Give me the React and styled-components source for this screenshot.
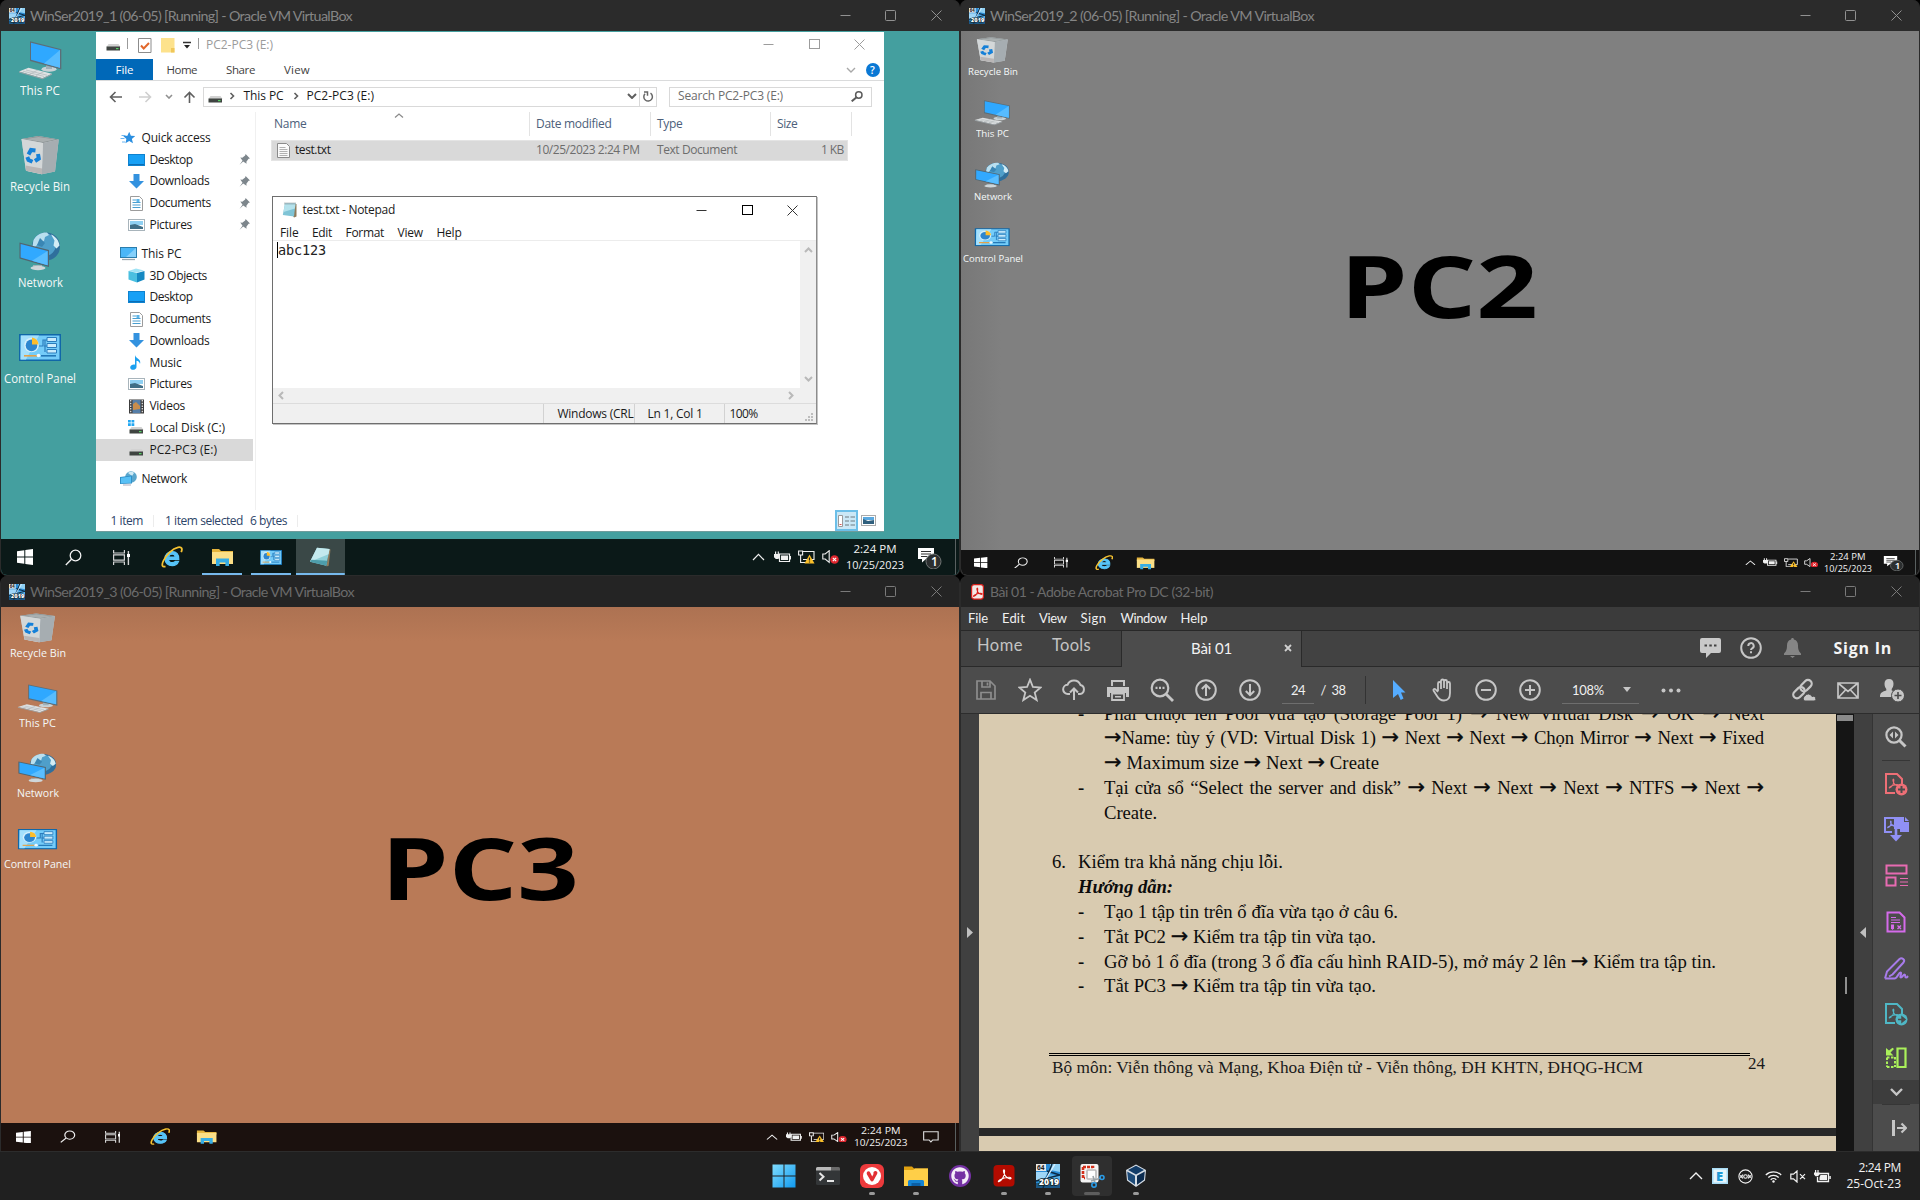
import React, { useLayoutEffect, useRef } from "react";
import styled, { createGlobalStyle, css } from "styled-components";
import { FaGithub } from "react-icons/fa";

const UI = '"Open Sans", "Noto Sans", sans-serif';
const HOST = 'Lato, "Open Sans", sans-serif';

const Global = createGlobalStyle`
  * { box-sizing: border-box; }
  html, body { margin: 0; padding: 0; background: #000; overflow: hidden; }
  svg { display: block; flex: none; }
`;

/* ---------- text that is tracked or stretched to a set width ---------- */

const TextBox = styled.span`
  display: block;
  flex: none;
  white-space: pre;
  width: ${(p) => (p.$w ? p.$w + "px" : "auto")};
  font-family: ${(p) => p.$font || UI};
  font-size: ${(p) => p.$size || 12}px;
  font-weight: ${(p) => p.$weight || 400};
  font-style: ${(p) => (p.$italic ? "italic" : "normal")};
  line-height: ${(p) => p.$lh || 16}px;
  color: ${(p) => p.$color || "#1a1a1a"};
`;
const TextRun = styled.span`
  display: inline-block;
  transform-origin: 0 50%;
`;

function T({ w, size, color, font, weight, italic, lh, stretch, children }) {
  const ref = useRef(null);
  useLayoutEffect(() => {
    const el = ref.current;
    if (!el || !w) return;
    el.style.letterSpacing = "0px";
    el.style.transform = "none";
    const natural = el.getBoundingClientRect().width;
    if (stretch) el.style.transform = `scaleX(${w / natural})`;
    else el.style.letterSpacing = `${(w - natural) / el.textContent.length}px`;
  }, [w, stretch, children]);
  return (
    <TextBox $w={w} $size={size} $color={color} $font={font} $weight={weight} $italic={italic} $lh={lh}>
      <TextRun ref={ref}>{children}</TextRun>
    </TextBox>
  );
}

/* ---------- host window chrome ---------- */

const Screen = styled.div`
  width: 1920px;
  height: 1200px;
  display: grid;
  grid-template-columns: 960px 960px;
  grid-template-rows: 576px 575px 49px;
  overflow: hidden;
  background: #000;
`;
const Win = styled.section`
  display: flex;
  flex-direction: column;
  overflow: hidden;
  border: solid #2b2b2b;
  border-width: 0 1px ${(p) => (p.$upper ? 1 : 0)}px;
  border-radius: 7px 7px ${(p) => (p.$upper ? "7px 7px" : "0 0")};
  background: #262626;
`;
const TitleBar = styled.header`
  height: 31px;
  flex: none;
  display: flex;
  align-items: center;
  padding-left: 8px;
  background: ${(p) => p.$bg || "#2b2b2b"};
`;
const TitleText = styled.div`
  padding: 0 0 0 ${(p) => p.$gap || 5}px;
  flex: 1;
`;
const CtrlCell = styled.div`
  width: ${(p) => p.$w || 45.6}px;
  height: 29px;
  display: grid;
  place-items: center;
`;

function Controls({ color = "#8a8a8a", w, sharp, strong }) {
  const s = { fill: "none", stroke: color, strokeWidth: 1 };
  return (
    <>
      <CtrlCell $w={w}><svg width="11" height="11" {...s}><path d="M0.5 5.5h10" /></svg></CtrlCell>
      <CtrlCell $w={w}><svg width="11" height="11" {...s} stroke={strong || color}><rect x="0.5" y="0.5" width="10" height={sharp ? 9 : 10} rx={sharp ? 0 : 1} /></svg></CtrlCell>
      <CtrlCell $w={w}><svg width="11" height="11" {...s}><path d="M0.5 0.5l10 10M10.5 0.5l-10 10" /></svg></CtrlCell>
    </>
  );
}

const VmIcon = ({ size = 16 }) => (
  <svg width={size} height={size} viewBox="0 0 24 24">
    <rect width="24" height="24" fill="#2a8cd6" />
    <path d="M0 8h12l-4 8H0z" fill="#9fd6f7" />
    <path d="M14 0h10v8l-10-2z" fill="#8fd0f5" />
    <path d="M13 10l11 2v5H10z" fill="#56b0ea" />
    <path d="M16 0L7 24M11 7l13 4M0 17l24-6" stroke="#0b2a45" strokeWidth="1.5" />
    <path d="M19 0L10 15" stroke="#d9f1ff" strokeWidth="1.3" />
    <rect width="10" height="7" fill="#e8e8e8" />
    <text x="1" y="6" fontSize="6.5" fontWeight="700" fontFamily="Open Sans" fill="#222">64</text>
    <rect y="19" width="24" height="5" fill="#14334f" opacity=".6" />
    <text x="3" y="20.5" fontSize="8.6" fontWeight="800" fontFamily="Open Sans" fill="#fff" stroke="#122" strokeWidth="1.4" paintOrder="stroke" textLength="20">2019</text>
  </svg>
);

/* ---------- large desktop icons ---------- */

const Big = ({ w, h, children }) => (
  <svg width={w} height={h} viewBox="0 0 44 44" preserveAspectRatio="none">{children}</svg>
);
const BigPC = (p) => (
  <Big {...p}>
    <ellipse cx="31" cy="31.2" rx="7.5" ry="2.6" fill="#c9d2d6" />
    <path d="M28 26h6v5h-6z" fill="#9fb0b8" />
    <path d="M12 3.3L43.3 11.2V31.5L12 23z" fill="#5c6e78" />
    <path d="M13 4.8L42 12V29.8L13 21.8z" fill="#2fa8ff" />
    <path d="M42 12V29.8L26 25.4z" fill="#57bcff" />
    <path d="M1 33.4L10.5 29.8L34 35.8L24.5 40.2z" fill="#dfe2e3" />
    <path d="M5 33.2l21 5.2M8 32l21 5.2M12 36l8-4M18 37.5l8-4" stroke="#aab0b3" strokeWidth=".6" />
    <path d="M1 33.4L24.5 40.2L34 35.8v1L24.5 41.3L1 34.4z" fill="#9aa2a6" />
  </Big>
);
const BigBin = (p) => (
  <Big {...p}>
    <path d="M3.5 5L20.5 2L40.7 5.4L37 37.6L23.8 40.3L8 36.8z" fill="#c6cbcd" />
    <path d="M3.5 5L20.5 2L40.7 5.4L25 9z" fill="#8c9496" />
    <path d="M6.5 5.2L20.5 3L37.5 5.5L25 8z" fill="#a9afb0" />
    <path d="M25 9L40.7 5.4L37 37.6L23.8 40.3z" fill="#a6adb1" />
    <path d="M3.5 5L25 9L23.8 40.3L8 36.8z" fill="#d3d7d8" />
    <path d="M7.6 31.5L24 34.5V40.3L8 36.8z" fill="#b9b6b6" />
    <g fill="none" stroke="#1580d8" strokeWidth="4">
      <path d="M10.500 20.500l2.500-4.500 4.500.5" />
      <path d="M20 20l.8 4.500-3.800 2.500" />
      <path d="M14.500 27.800l-4-1.800-1.200-3" />
    </g>
  </Big>
);
const BigNet = (p) => (
  <Big {...p}>
    <circle cx="28" cy="16.5" r="14" fill="#2f6f9c" />
    <circle cx="26.500" cy="14.500" r="11.500" fill="#4f9fca" />
    <path d="M15.500 10C19 4 25 2 29 2.600L31 5l-4 2-1 4-5 2-4 4-2.500-1z" fill="#b9dfef" />
    <path d="M33 4.500c5 2 8 6.500 8.500 11l-3 3-3-3 1-5z" fill="#d3ecf5" />
    <path d="M22 8l5 5-3 4-5-2z" fill="#3a86b4" />
    <path d="M15 35h9v3h-9z" fill="#9fb0b8" />
    <ellipse cx="20" cy="38" rx="7.500" ry="2.200" fill="#cfd6d9" />
    <path d="M1.500 12.600L31 20V37L1.500 28.600z" fill="#52656f" />
    <path d="M2.600 14L29.600 21V35.200L2.600 27.500z" fill="#31a9ff" />
    <path d="M29.600 21V35.200L14 30.700z" fill="#5abeff" />
  </Big>
);
const CpBody = () => (
  <>
    <rect x="1" y="8" width="42" height="27" fill="#1067a8" />
    <rect x="2.500" y="9.500" width="39" height="24" fill="#74ccf9" />
    <path d="M3 9.500h18L8 33.500H2.500z" fill="#a5e0fc" />
    <circle cx="13.500" cy="19" r="7.300" fill="#d5effc" />
    <circle cx="13.500" cy="19.400" r="5.800" fill="#2d86cf" />
    <path d="M14 18.500V11.500A7 7 0 0 1 20.500 18.500z" fill="#fdbd2c" />
    <path d="M21 20h4V14h4M29 20h-3M27 26V14" fill="none" stroke="#2b7dbd" strokeWidth="1.200" />
    <path d="M29 11.500h9.500v4H29zM29 17.500h9.500v4H29zM29 23.500h9.500v3.500H29z" fill="#c9ebfc" stroke="#2b7dbd" strokeWidth="1" />
    <path d="M6 29.800h13" stroke="#e2a24a" strokeWidth="1.600" />
    <path d="M23 29.800h15" stroke="#2278b8" strokeWidth="1.600" />
    <circle cx="20.500" cy="29.500" r="1.800" fill="#eef9ff" />
  </>
);
const BigCP = (p) => <Big {...p}><CpBody /></Big>;

const ICONS = { "This PC": BigPC, "Recycle Bin": BigBin, Network: BigNet, "Control Panel": BigCP };

/* ---------- guest desktops ---------- */

const Guest = styled.div`
  position: relative;
  flex: 1;
  display: flex;
  flex-direction: column;
  background: ${(p) => p.$bg};
`;
const Canvas = styled.div`
  flex: 1;
  position: relative;
`;
const IconColumn = styled.div`
  display: flex;
  flex-direction: column;
  width: ${(p) => p.$w}px;
  padding-top: ${(p) => p.$top}px;
`;
const DeskItem = styled.div`
  height: ${(p) => p.$h}px;
  display: flex;
  flex-direction: column;
  align-items: center;
`;
const Wallpaper = styled.div`
  position: absolute;
  left: ${(p) => p.$x}px;
  top: ${(p) => p.$y}px;
`;

function DesktopIcons({ items, colW, top, pitch, iw, ih, size, lh, widths, color }) {
  return (
    <IconColumn $w={colW} $top={top}>
      {items.map((name) => {
        const I = ICONS[name];
        return (
          <DeskItem key={name} $h={pitch}>
            <I w={iw} h={ih} />
            <T w={widths[name]} size={size} lh={lh} color={color || "#f4f8f8"} stretch>{name}</T>
          </DeskItem>
        );
      })}
    </IconColumn>
  );
}

const GuestBar = styled.footer`
  height: ${(p) => p.$h}px;
  flex: none;
  display: flex;
  background: ${(p) => p.$bg};
`;
const BarCell = styled.div`
  width: ${(p) => p.$w}px;
  height: 100%;
  display: grid;
  place-items: center;
  flex: none;
  padding-right: ${(p) => p.$pr || 0}px;
  ${(p) => p.$open && css`
    background: linear-gradient(#76b9ed, #76b9ed) 50% 100% / 40px 2px no-repeat;
  `}
  ${(p) => p.$active && css`
    background: linear-gradient(#76b9ed, #76b9ed) 50% 100% / 100% 2px no-repeat #3a4847;
  `}
`;
const Spacer = styled.div`flex: 1;`;
const Clock = styled.div`
  width: ${(p) => p.$w}px;
  display: flex;
  flex-direction: column;
  align-items: center;
  justify-content: center;
`;
const PeekLine = styled.div`
  width: 4px;
  border-left: 1px solid #596060;
`;

const Sv = ({ sx, sy, w, h = w, children }) => (
  <svg width={w * sx} height={h * sy} viewBox={`0 0 ${w} ${h}`} preserveAspectRatio="none">{children}</svg>
);
const FolderPic = () => (
  <>
    <path d="M1 2h7l2 2h12v3H1z" fill="#e5b43c" />
    <path d="M1 5h21v12H1z" fill="#fbdf87" />
    <path d="M5 19v-7.500h13V19h-3.600v-3.600H8.600V19z" fill="#37aee6" />
  </>
);
const IePic = () => (
  <>
    <path d="M17.800 13.500H7.500c.3 2.200 2 3.200 3.800 3.200 1.500 0 2.500-.6 3-1.400h3.300c-1 2.800-3.500 4.400-6.400 4.400-4 0-7.200-2.800-7.200-7S7.200 5.500 11.200 5.500c4.200 0 7 3 6.600 8zM7.600 11h6.700c-.2-1.800-1.500-2.900-3.200-2.900S7.900 9.200 7.600 11z" fill="#57c4f8" stroke="#57c4f8" strokeWidth="1.200" />
    <path d="M4.500 20.300C1.500 21.500.3 19.500 2.300 15 5 9 11.500 2.500 17 1.300c4-.8 4.600 1.700 3.200 4.900" fill="none" stroke="#f7c331" strokeWidth="1.800" />
  </>
);

function GuestTaskbar({ h, bg, sx, sy, apps = 2, clock, badge, textLh, textSize }) {
  const g = { sx, sy };
  const white = "#f0f0f0";
  return (
    <GuestBar $h={h} $bg={bg}>
      <BarCell $w={48 * sx}>
        <Sv {...g} w={16}><path d="M0 2.300L7.300 1.200V7.500H0zM8.300 1L16 0V7.500H8.300zM0 8.500h7.300v6.300L0 13.700zM8.300 8.500H16V16l-7.700-1z" fill="#fff" /></Sv>
      </BarCell>
      <BarCell $w={48 * sx}>
        <Sv {...g} w={17}><circle cx="10.500" cy="6.500" r="5.300" fill="none" stroke={white} strokeWidth="1.300" /><path d="M6.500 10.300L.8 16" stroke={white} strokeWidth="1.400" /></Sv>
      </BarCell>
      <BarCell $w={48 * sx}>
        <Sv {...g} w={17} h={15}><path d="M.6 0v3h10.800V0M.6 15v-3h10.800v3M.6 4.800h10.800v5.400H.6z" fill="none" stroke="#d4d4d4" strokeWidth="1.200" /><path d="M15.400 1v14" stroke="#d4d4d4" strokeWidth="1.400" /><path d="M14 4h3v3h-3z" fill="#fff" /></Sv>
      </BarCell>
      <BarCell $w={54 * sx}><Sv {...g} w={22}><IePic /></Sv></BarCell>
      <BarCell $w={46 * sx} $open={apps > 2}><Sv {...g} w={23} h={20}><FolderPic /></Sv></BarCell>
      {apps > 2 && (
        <>
          <BarCell $w={51 * sx} $open>
            <svg width="22" height="15" viewBox="1 8 42 27" preserveAspectRatio="none"><CpBody /></svg>
          </BarCell>
          <BarCell $w={48.500 * sx} $active>
            <svg width="23" height="20" viewBox="0 0 23 20"><path d="M20 2l1.500.4-1.800 16.400-2.200.6z" fill="#8f7a5a" /><path d="M8 .8L20.500 2 17.300 18.800 1 14.800z" fill="#8fd0d8" /><path d="M8 .8L20.500 2l-1 5.200L1 14.800z" fill="#c4eaee" /><path d="M17.300 18.800L1 14.800l1.500-2 16 1z" fill="#4d9dab" /></svg>
          </BarCell>
        </>
      )}
      <Spacer />
      <BarCell $w={24 * sx}><Sv {...g} w={13} h={8}><path d="M1 7l5.500-5.600L12 7" fill="none" stroke={white} strokeWidth="1.200" /></Sv></BarCell>
      <BarCell $w={24 * sx}>
        <Sv {...g} w={17} h={12}><path d="M5.500 3h10v7.500h-10z" fill="none" stroke={white} strokeWidth="1.200" /><path d="M7 4.500h7v4.500H7zM15.800 5h1.200v3.500h-1.200zM0 3h6v3.300L4.300 8H1.800L0 6.300zM1 .5h1.200V3H1zM3.700.5h1.200V3H3.700z" fill={white} /></Sv>
      </BarCell>
      <BarCell $w={24 * sx}>
        <Sv {...g} w={17} h={14}><path d="M5 1.500h11v8H5M.6 1h4v4h-4zM2.600 5v7.500H8" fill="none" stroke={white} strokeWidth="1.100" /><path d="M11.500 4.500L16.500 13.500h-10z" fill="#fbc02a" /><path d="M11.500 7.500v3M11.500 11.500v1" stroke="#222" strokeWidth="1.200" /></Sv>
      </BarCell>
      <BarCell $w={24 * sx}>
        <Sv {...g} w={17} h={14}><path d="M.8 4h2.400l4-3.300v11.600L3.200 9H.8z" fill="none" stroke={white} strokeWidth="1.100" /><circle cx="12.500" cy="9.500" r="4.300" fill="#e0262e" /><path d="M10.800 7.800l3.400 3.400M14.200 7.800l-3.400 3.400" stroke="#fff" strokeWidth="1.100" /></Sv>
      </BarCell>
      <Clock $w={66 * sx}>
        <T w={clock[0]} size={textSize} lh={textLh} color="#f2f2f2" stretch>2:24 PM</T>
        <T w={clock[1]} size={textSize} lh={textLh} color="#f2f2f2" stretch>10/25/2023</T>
      </Clock>
      <BarCell $w={47 * sx} $pr={4}>
        {badge ? (
          <Sv {...g} w={25} h={24}><path d="M1 3h16v11h-8l-4 3.500V14H1z" fill="#fff" /><path d="M4 6.500h10M4 9h10M4 11.500h6" stroke="#333" strokeWidth="1" /><circle cx="16.500" cy="16.500" r="7.500" fill="#2c2f30" stroke="#707575" /><text x="14" y="21" fontSize="12" fontFamily="Open Sans" fontWeight="600" fill="#fff">1</text></Sv>
        ) : (
          <Sv {...g} w={17} h={16}><path d="M.7 1h15.600v10.500H10.500L8.500 14l-2-2.500H.7z" fill="none" stroke="#ddd" strokeWidth="1.200" /></Sv>
        )}
      </BarCell>
      <PeekLine />
    </GuestBar>
  );
}

/* ---------- file explorer ---------- */

const Explorer = styled.div`
  position: absolute;
  left: 95px;
  top: 1px;
  width: 788px;
  height: 500px;
  display: flex;
  flex-direction: column;
  background: #fff;
  border-bottom: 1px solid #6f9c9c;
`;
const ExTitle = styled.div`
  height: 27px;
  display: flex;
  align-items: center;
  padding: 0 1.500px 1.500px 9px;
`;
const Sep = styled.i`
  width: 1px;
  height: 11px;
  background: #9a9a9a;
  margin: 0 ${(p) => p.$r}px 3px ${(p) => p.$l}px;
`;
const Gap = styled.i`
  flex: none;
  width: ${(p) => p.$w}px;
`;
const Ribbon = styled.div`
  height: 22px;
  display: flex;
  align-items: center;
  border-bottom: 1px solid #dadbdc;
`;
const FileTab = styled.div`
  width: 57px;
  height: 21px;
  display: grid;
  place-items: center;
  background: #0068b8;
`;
const AddressRow = styled.div`
  height: 31px;
  display: flex;
  align-items: center;
  padding: 0 0 0 13px;
`;
const Field = styled.div`
  height: 20px;
  flex: none;
  width: ${(p) => p.$w}px;
  display: flex;
  align-items: center;
  border: 1px solid #d9d9d9;
  padding: 0 0 1px ${(p) => p.$p}px;
`;
const Refresh = styled.div`
  width: 17px;
  height: 18px;
  margin-bottom: -1px;
  border-left: 1px solid #d9d9d9;
  display: grid;
  place-items: center;
`;
const ExBody = styled.div`
  flex: 1;
  display: flex;
  min-height: 0;
`;
const Tree = styled.nav`
  width: 160px;
  padding-top: 15px;
  border-right: 1px solid #f0f0f0;
`;
const TreeRow = styled.div`
  height: 21.75px;
  width: 157px;
  display: flex;
  align-items: center;
  padding-left: ${(p) => (p.$root ? 24 : 32)}px;
  margin-top: ${(p) => p.$gap || 0}px;
  background: ${(p) => (p.$sel ? "#d9d9d9" : "none")};
`;
const TreeIcon = styled.span`
  width: 21.500px;
  flex: none;
`;
const Pin = styled.span`
  margin-left: auto;
  padding-right: 3px;
`;
const Files = styled.div`
  flex: 1;
  padding-left: 15px;
`;
const HeadRow = styled.div`
  height: 24px;
  display: flex;
`;
const HeadCell = styled.div`
  width: ${(p) => p.$w}px;
  padding: 4px 0 0 ${(p) => p.$p}px;
  border-right: 1px solid #e3e3e3;
`;
const FileRow = styled.div`
  margin-top: 4px;
  height: 21px;
  width: 577px;
  display: flex;
  align-items: center;
  padding-bottom: 1px;
  background: #d9d9d9;
  border: 1px solid #e4e4e4;
`;
const Cell = styled.div`
  width: ${(p) => p.$w}px;
  flex: none;
  display: flex;
  align-items: center;
  justify-content: ${(p) => (p.$end ? "flex-end" : "flex-start")};
`;
const ExStatus = styled.div`
  height: 21px;
  display: flex;
  align-items: center;
  padding: 0 8px 0 14.500px;
`;
const StatusSep = styled.i`
  width: 1px;
  height: 12px;
  background: #ececec;
`;
const ViewBtn = styled.div`
  width: 23px;
  height: 21px;
  display: grid;
  place-items: center;
  background: #cbe8f6;
  border: 2px solid #6cbfe8;
  margin-right: 3px;
`;

const Drive = ({ win }) => (
  <svg width="16" height="15" viewBox="0 0 16 15">
    <path d="M3.500 7h10l2 3H1.500z" fill="#d2d2d2" />
    <rect x="1.500" y="9.500" width="13.500" height="4" fill="#3f4441" />
    <rect x="11" y="11" width="2.500" height="1.200" fill="#56d364" />
    {win && <path d="M0 0h2.800v2.600H0zM3.500 0h2.800v2.600H3.500zM0 3.300h2.800v2.600H0zM3.500 3.300h2.800v2.600H3.500z" fill="#22a7f2" />}
  </svg>
);
const Globe = () => (
  <svg width="17" height="15" viewBox="0 0 17 15"><circle cx="11" cy="6" r="5.800" fill="#5aa6cc" /><path d="M8 2c3-2 5-1 6 0l-2 3z" fill="#cfeaf5" /><path d="M0 6l12-1.500v8l-12 .5z" fill="#2f90c8" /><path d="M1 6.800l10-1.200v6.200l-10 .4z" fill="#58c0f5" /><path d="M3 13.500h8v1H3z" fill="#aab" /></svg>
);
const Small = {
  star: <svg width="16" height="14" viewBox="0 0 16 14"><path d="M9.200 .8l1.700 4 4.300.3-3.300 2.800 1.100 4.400-3.800-2.400-3.800 2.400 1-4.400-3.200-2.800 4.200-.3z" fill="#2b8fe0" /><path d="M1.500 4.500h4M.5 7.500h4M2 11h3" stroke="#6cb6f0" /></svg>,
  desktop: <svg width="17" height="12" viewBox="0 0 17 12"><rect x=".5" y=".5" width="16" height="11" fill="#17a0f5" stroke="#0e82cf" /><path d="M1 10.500h15" stroke="#0b6db5" /></svg>,
  down: <svg width="17" height="15" viewBox="0 0 17 15"><path d="M5.500 0h6v7H16l-7.500 7.500L1 7h4.500z" fill="#3392df" /></svg>,
  doc: <svg width="17" height="15" viewBox="0 0 17 15"><path d="M2.500.5h9l3 3v11h-12z" fill="#fff" stroke="#9c9c9c" /><path d="M4.500 4h4M4.500 6.500h8M4.500 9h8M4.500 11.500h8" stroke="#4a9fd0" /><path d="M8.500 3h3v3h-3z" fill="#5db5e8" /></svg>,
  pic: <svg width="17" height="12" viewBox="0 0 17 12"><rect x=".5" y=".5" width="16" height="11" fill="#fff" stroke="#a8b4bb" /><path d="M2 2h13v4H2z" fill="#8fd0f2" /><path d="M2 6l5-1 8 3v2H2z" fill="#3f6e86" /></svg>,
  pc: <svg width="17" height="14" viewBox="0 0 17 14"><rect x=".5" y=".5" width="16" height="10" fill="#4ab6f7" stroke="#2b7dac" /><path d="M16 1v9L6 10z" fill="#85d0fb" /><path d="M2 12.500h13" stroke="#9aa6ad" strokeWidth="1.300" /></svg>,
  cube: <svg width="17" height="15" viewBox="0 0 17 15"><path d="M.5 3L8 .5l8 2-7 2z" fill="#9fe3f5" /><path d="M.5 3L9 5v9.500L.5 11.500z" fill="#49bfe0" /><path d="M9 5l7.500-2v8.500L9 14.500z" fill="#1489c2" /></svg>,
  music: <svg width="17" height="15" viewBox="0 0 17 15"><path d="M7 0c.5 3.500 6.500 3.500 5 9-.3-2-1.700-3-3.500-3.200v6.200C8.500 15.500 2 16 2.200 12.300 2.500 10 5 9.200 7 9.700z" fill="#1aa0f0" /></svg>,
  video: <svg width="17" height="15" viewBox="0 0 17 15"><rect x="1" y=".5" width="15" height="14" fill="#3c3c3c" /><path d="M4.500 1h8v13h-8z" fill="#567ea8" /><path d="M5 5l3-2 4 4v3l-7 1z" fill="#c98d4c" /><path d="M2.700 1v13M14.300 1v13" stroke="#e0e0e0" strokeWidth="1.300" strokeDasharray="1.500 1.200" /></svg>,
  drivec: <Drive win />,
  drive: <Drive />,
  net: <Globe />,
};

const TREE = [
  { n: "Quick access", i: "star", w: 69, root: 1 },
  { n: "Desktop", i: "desktop", w: 43, pin: 1 },
  { n: "Downloads", i: "down", w: 60, pin: 1 },
  { n: "Documents", i: "doc", w: 61.5, pin: 1 },
  { n: "Pictures", i: "pic", w: 42.5, pin: 1 },
  { n: "This PC", i: "pc", w: 40, root: 1, gap: 7.3 },
  { n: "3D Objects", i: "cube", w: 57.5 },
  { n: "Desktop", i: "desktop", w: 43 },
  { n: "Documents", i: "doc", w: 61.5 },
  { n: "Downloads", i: "down", w: 60 },
  { n: "Music", i: "music", w: 32 },
  { n: "Pictures", i: "pic", w: 42.5 },
  { n: "Videos", i: "video", w: 35.5 },
  { n: "Local Disk (C:)", i: "drivec", w: 75.5 },
  { n: "PC2-PC3 (E:)", i: "drive", w: 67.5, sel: 1 },
  { n: "Network", i: "net", w: 45.5, root: 1, gap: 7.3 },
];

const Arrow = ({ d, w = 14, h = 12, c = "#5f5f5f", sw = 1.6 }) => (
  <svg width={w} height={h} viewBox={`0 0 ${w} ${h}`} fill="none" stroke={c} strokeWidth={sw}><path d={d} /></svg>
);

function ExplorerWindow() {
  return (
    <Explorer>
      <ExTitle>
        <Drive /><Sep $l={5.5} $r={10.5} />
        <svg width="14" height="16"><path d="M.5 1.500h12.500v14H.5z" fill="#fff" stroke="#8c8c8c" /><path d="M3 8.500l2.700 3L11 6" fill="none" stroke="#e2682c" strokeWidth="2" /></svg>
        <Gap $w={9} />
        <svg width="14" height="16"><path d="M0 1h13.500v14.500H0z" fill="#fde28c" /><path d="M10 11h3.500v4.500H10z" fill="#f0c75a" /></svg>
        <Gap $w={7.5} />
        <svg width="8" height="8"><path d="M0 1.500h8" stroke="#333" strokeWidth="1.500" /><path d="M1 4h6L4 7.500z" fill="#222" /></svg>
        <Sep $l={7.5} $r={7} />
        <T w={67} color="#9b9b9b" size={12}>PC2-PC3 (E:)</T>
        <Spacer />
        <Controls color="#9c9c9c" w={45.6} sharp />
      </ExTitle>
      <Ribbon>
        <FileTab><T w={18} size={11.5} color="#fff">File</T></FileTab>
        <Gap $w={13.5} /><T w={30.5} size={11.5} color="#3f3f3f">Home</T>
        <Gap $w={29} /><T w={29} size={11.5} color="#3f3f3f">Share</T>
        <Gap $w={29} /><T w={26} size={11.5} color="#3f3f3f">View</T>
        <Spacer />
        <Arrow d="M1 1l4 4 4-4" w={10} h={6} c="#a8a8a8" sw={1.4} />
        <Gap $w={10} />
        <svg width="14" height="14"><circle cx="7" cy="7" r="7" fill="#0a78d4" /><text x="4" y="11" fontSize="10.500" fontFamily="Open Sans" fontWeight="600" fill="#fff">?</text></svg>
        <Gap $w={4} />
      </Ribbon>
      <AddressRow>
        <Arrow d="M13 6H1.500M6.500 1l-5 5 5 5" />
        <Gap $w={16} /><Arrow d="M0 6h11.500M6.500 1l5 5-5 5" c="#cfcfcf" />
        <Gap $w={12} /><Arrow d="M1 1l3 3 3-3" w={8} h={5} c="#909090" />
        <Gap $w={10} /><Arrow d="M6.500 12V1.500M1.500 6.500l5-5 5 5" w={13} h={12} />
        <Gap $w={7} />
        <Field $w={454} $p={2.5}>
          <Drive /><Gap $w={6.5} /><Arrow d="M1.500 1l3 3-3 3" w={6} h={8} />
          <Gap $w={8.5} /><T w={40}>This PC</T><Gap $w={9} /><Arrow d="M1.500 1l3 3-3 3" w={6} h={8} />
          <Gap $w={8} /><T w={67.5}>PC2-PC3 (E:)</T>
          <Spacer />
          <Arrow d="M1 1l4 4 4-4" w={10} h={6} sw={2} /><Gap $w={2.5} />
          <Refresh><svg width="12" height="12" fill="none" stroke="#666" strokeWidth="1.500"><path d="M8.500 2.200A4.300 4.300 0 1 1 3 2.800" /><path d="M2 1h3.500v3.800" /></svg></Refresh>
        </Field>
        <Gap $w={12} />
        <Field $w={203} $p={8}>
          <T w={105} color="#6d6d6d">Search PC2-PC3 (E:)</T>
          <Spacer />
          <svg width="12" height="11" fill="none" stroke="#5c5c5c"><circle cx="7.800" cy="4" r="3.200" strokeWidth="1.500" /><path d="M5.300 6.500L.7 10.300" strokeWidth="2" /></svg>
          <Gap $w={8} />
        </Field>
      </AddressRow>
      <ExBody>
        <Tree>
          {TREE.map((r, k) => (
            <TreeRow key={k} $root={r.root} $gap={r.gap} $sel={r.sel}>
              <TreeIcon>{Small[r.i]}</TreeIcon>
              <T w={r.w}>{r.n}</T>
              {r.pin && <Pin><svg width="11" height="11" viewBox="0 0 10 10"><path d="M6 0l4 4-1.300.4-2 2.600.2 1.800L3.800 6.800.5 9.800 3.200 6.200 1.200 3.200l1.800.1 2.600-2z" fill="#7d868c" /></svg></Pin>}
            </TreeRow>
          ))}
        </Tree>
        <Files>
          <HeadRow>
            <HeadCell $w={259} $p={3}><T w={32.5} color="#4c607a">Name</T></HeadCell>
            <HeadCell $w={121} $p={6}><T w={75.5} color="#4c607a">Date modified</T></HeadCell>
            <HeadCell $w={120} $p={6}><T w={25.5} color="#4c607a">Type</T></HeadCell>
            <HeadCell $w={81} $p={6}><T w={20.5} color="#4c607a">Size</T></HeadCell>
          </HeadRow>
          <FileRow>
            <Cell $w={264}>
              <Gap $w={5} />
              <svg width="13" height="15"><path d="M.5.500h9l3 3v11H.5z" fill="#fafafa" stroke="#8a8a8a" /><path d="M2.500 4.500h6M2.500 6.500h8M2.500 8.500h8M2.500 10.500h8M2.500 12.500h8" stroke="#a0a0a0" strokeWidth=".8" /></svg>
              <Gap $w={5} /><T w={35.5}>test.txt</T>
            </Cell>
            <Cell $w={121}><T w={103.5} color="#6d6d6d">10/25/2023 2:24 PM</T></Cell>
            <Cell $w={100}><T w={80} color="#6d6d6d">Text Document</T></Cell>
            <Cell $w={86.5} $end><T w={22.5} color="#6d6d6d">1 KB</T></Cell>
          </FileRow>
        </Files>
      </ExBody>
      <ExStatus>
        <T w={32.5} color="#2d4468">1 item</T><Gap $w={10} /><StatusSep /><Gap $w={11} />
        <T w={78} color="#2d4468">1 item selected</T><Gap $w={7} /><T w={37} color="#2d4468">6 bytes</T>
        <Gap $w={10} /><StatusSep />
        <Spacer />
        <ViewBtn><svg width="17" height="12"><path d="M.5.500h4v11h-4z" fill="#fff" stroke="#9a9a9a" /><path d="M1.500 9.500h2" stroke="#d55" /><path d="M7 2h4M12.500 2H17M7 6h4M12.500 6H17M7 10h4M12.500 10H17" stroke="#6f7a80" /></svg></ViewBtn>
        <svg width="15" height="11"><rect x=".5" y=".5" width="14" height="10" fill="#fff" stroke="#aaa" /><path d="M2 2h11v3H2z" fill="#5aa9e0" /><path d="M2 4l5 2 6-1v4H2z" fill="#2f5f7d" /></svg>
      </ExStatus>
      <SortMark><Arrow d="M1 4.500l4-3.500 4 3.500" w={10} h={5} c="#8a8a8a" sw={1.2} /></SortMark>
    </Explorer>
  );
}
const SortMark = styled.div`
  position: absolute;
  left: 298px;
  top: 81px;
`;

/* ---------- notepad ---------- */

const Notepad = styled.div`
  position: absolute;
  left: 271px;
  top: 165px;
  width: 545px;
  height: 228px;
  display: flex;
  flex-direction: column;
  background: #fff;
  border: 1px solid #6e6e6e;
  border-right-color: #8c8c8c;
  box-shadow: 1px 1px 0 #c4c4c4;
`;
const NpTitle = styled.div`
  height: 27px;
  display: flex;
  align-items: center;
  padding: 0 0.500px 1px 8.500px;
`;
const NpMenu = styled.div`
  height: 17px;
  display: flex;
  align-items: center;
  gap: 13.500px;
  padding: 2px 0 0 7px;
  border-bottom: 1px solid #ececec;
`;
const NpArea = styled.div`
  flex: 1;
  display: flex;
`;
const NpText = styled.div`
  flex: 1;
  display: flex;
  padding: 1px 0 0 4px;
`;
const Caret = styled.i`
  width: 1px;
  height: 16px;
  background: #000;
`;
const VScroll = styled.div`
  width: 16px;
  display: flex;
  flex-direction: column;
  justify-content: space-between;
  align-items: center;
  padding: 6px 0;
  background: #f0f0f0;
`;
const HScroll = styled.div`
  height: 15px;
  display: flex;
  justify-content: space-between;
  align-items: center;
  padding: 0 22px 0 5px;
  background: #f0f0f0;
`;
const NpStatus = styled.div`
  height: 20px;
  display: flex;
  background: #f0f0f0;
  border-top: 1px solid #dcdcdc;
`;
const NpCell = styled.div`
  width: ${(p) => p.$w}px;
  padding: 2px 0 0 ${(p) => p.$p || 0}px;
  border-right: 1px solid #d2d2d2;
  overflow: hidden;
`;
const Pad2 = styled.div`padding-top: 2px;`;
const Grip = styled.div`padding: 9px 2px 0 0;`;

const NotepadWindow = () => (
  <Notepad>
    <NpTitle>
      <svg width="16" height="16"><path d="M3 2l11.500 0v12.500L12 15.500z" fill="#8f7a5a" /><path d="M3 1.500h10.500L12 14.500 .8 13z" fill="#7fc4d6" /><path d="M3 1.500h10.500l-.6 5L1.500 10z" fill="#b4e2ec" /><path d="M3 .5v2M5 .5v2M7 .5v2M9 .5v2M11 .5v2M13 .5v2" stroke="#6d7c80" strokeWidth=".8" /></svg>
      <Gap $w={5} /><T w={92.5}>test.txt - Notepad</T><Spacer />
      <Controls color="#333" strong="#000" w={45.6} sharp />
    </NpTitle>
    <NpMenu>
      <T w={18.5}>File</T><T w={20}>Edit</T><T w={38.5}>Format</T><T w={25.5}>View</T><T w={25}>Help</T>
    </NpMenu>
    <NpArea>
      <NpText><Caret /><T w={48} size={13.5} font='"DejaVu Sans Mono", monospace' color="#222">abc123</T></NpText>
      <VScroll><Arrow d="M1 5l3.500-3.500L8 5" w={9} h={6} c="#b9b9b9" sw={2} /><Arrow d="M1 1l3.500 3.500L8 1" w={9} h={6} c="#b9b9b9" sw={2} /></VScroll>
    </NpArea>
    <HScroll><Arrow d="M5 1L1.500 4.500 5 8" w={6} h={9} c="#b9b9b9" sw={2} /><Arrow d="M1 1l3.500 3.500L1 8" w={6} h={9} c="#b9b9b9" sw={2} /></HScroll>
    <NpStatus>
      <NpCell $w={271} /><NpCell $w={91} $p={13.5}><T w={76}>Windows (CRL</T></NpCell>
      <NpCell $w={90} $p={12.5}><T w={55}>Ln 1, Col 1</T></NpCell>
      <Gap $w={4.5} /><Pad2><T w={28}>100%</T></Pad2><Spacer />
      <Grip><svg width="9" height="9" fill="#bdbdbd"><path d="M6 0h2v2H6zM3 3h2v2H3zM6 3h2v2H6zM0 6h2v2H0zM3 6h2v2H3zM6 6h2v2H6z" /></svg></Grip>
    </NpStatus>
  </Notepad>
);

/* ---------- Acrobat ---------- */

const MenuRow = styled.div`
  height: 24px;
  display: flex;
  align-items: center;
  padding: 0 0 1px 7px;
  gap: 14px;
  background: #3b3b3b;
  border-bottom: 1px solid #282828;
`;
const TabRow = styled.div`
  height: 36px;
  display: flex;
  background: #424242;
`;
const TabZone = styled.div`
  width: ${(p) => p.$w || "auto"};
  flex: ${(p) => p.$grow || "none"};
  display: flex;
  align-items: center;
  padding: 0 27px ${(p) => p.$pb}px 16px;
  border-bottom: 1px solid #2a2a2a;
`;
const ActiveTab = styled.div`
  width: 181px;
  display: flex;
  align-items: center;
  padding: 0 9px 3px 69px;
  justify-content: space-between;
  background: #4c4c4c;
  border: solid #2a2a2a;
  border-width: 0 1px;
`;
const Tools = styled.div`
  height: 47px;
  display: flex;
  align-items: center;
  padding-left: 3px;
  background: #4c4c4c;
  border-bottom: 1px solid #2d2d2d;
`;
const Tool = styled.div`
  width: ${(p) => p.$w || 44}px;
  flex: none;
  display: grid;
  place-items: center;
`;
const Under = styled.div`
  width: ${(p) => p.$w}px;
  height: 27px;
  display: flex;
  align-items: center;
  padding-left: ${(p) => p.$p}px;
  border-bottom: 1px solid #6e6e6e;
`;
const VLine = styled.i`
  width: 1px;
  height: 28px;
  background: #333;
`;
const DocRow = styled.div`
  flex: 1;
  display: flex;
  min-height: 0;
`;
const SideStrip = styled.div`
  width: 18px;
  flex: none;
  display: grid;
  place-items: center;
  background: #404040;
`;
const Pages = styled.div`
  width: 857px;
  flex: none;
  display: flex;
  flex-direction: column;
  gap: 8px;
  overflow: hidden;
  background: #282828;
`;
const Page = styled.article`
  height: ${(p) => p.$h}px;
  flex: none;
  overflow: hidden;
  background: #d9cbb0;
  color: #0c0c0c;
  font: 18.700px/24.850px "Liberation Serif", "Times New Roman", serif;
`;
const Lines = styled.div`
  margin-top: -12.500px;
  padding-left: 73px;
  height: 351.500px;
`;
const DocLine = styled.div`
  display: flex;
  height: 24.850px;
  margin-top: ${(p) => p.$gap || 0}px;
`;
const Mark = styled.b`
  width: ${(p) => p.$w}px;
  margin-left: ${(p) => p.$l || 0}px;
  font-weight: ${(p) => p.$weight || 700};
`;
const Just = styled.div`
  width: 660px;
  white-space: nowrap;
  text-align: justify;
  text-align-last: justify;
  letter-spacing: -0.150px;
`;
const Arr = styled.span`
  font-family: "DejaVu Sans", sans-serif;
  font-size: 21px;
  line-height: 0;
  -webkit-text-stroke: 0.300px #0c0c0c;
`;
const FootRule = styled.div`
  margin-left: 70px;
  width: 701px;
  height: 3px;
  border: solid #000;
  border-width: 1px 0;
`;
const Foot = styled.div`
  display: flex;
  padding-left: 73px;
`;
const ScrollTrack = styled.div`
  width: 18px;
  flex: none;
  background: #151515;
  padding: 1px 1px 0;
  display: flex;
  flex-direction: column;
  align-items: center;
`;
const Thumb = styled.i`
  width: 16px;
  height: 6px;
  background: #8a8a8a;
`;
const Mark2 = styled.i`
  width: 2px;
  height: 17px;
  margin: 256px 0 0 1px;
  background: #8f8f8f;
`;
const Rail = styled.aside`
  width: 47px;
  flex: none;
  display: flex;
  flex-direction: column;
  align-items: center;
  background: #4c4c4c;
  border-left: 1px solid #343434;
`;
const RailCell = styled.div`
  height: ${(p) => p.$h || 46}px;
  width: 46px;
  flex: none;
  display: grid;
  place-items: center;
  background: ${(p) => p.$bg || "none"};
`;
const HLine = styled.i`
  width: 28px;
  height: 1px;
  flex: none;
  background: #363636;
`;
const Gutter = styled.div`padding-left: 6px;`;

const Ic = ({ w = 24, h = w, c = "#c6c6c6", sw = 2, fill = "none", children }) => (
  <svg width={w} height={h} viewBox={`0 0 ${w} ${h}`} fill={fill} stroke={c} strokeWidth={sw}>{children}</svg>
);
const A = () => <Arr>→</Arr>;
const Acro = ({ x = 0, y = 0, s = 1, c }) => (
  <path transform={`translate(${x} ${y}) scale(${s})`} d="M1 11c2.500-1 5-5 5-9.500C6-.5 4.500 0 5 2c.5 3 3 6 6 6.500 1.500 0 1-1.500-1-1.500-3 0-6 .8-8.500 2.500C0 10.500 0 11.500 1 11z" fill="none" stroke={c} strokeWidth={1.1 / s} />
);

const DF = '"Liberation Serif", "Times New Roman", serif';
const Para = ({ w, children }) => <T w={w} size={18.7} lh={24.85} font={DF} color="#0c0c0c">{children}</T>;

function AcrobatWindow() {
  const m = { font: HOST, size: 13, color: "#f0f0f0" };
  return (
    <Win>
      <TitleBar $bg="#242424">
        <Gap $w={2} />
        <svg width="13" height="16" viewBox="0 0 13 16"><rect x=".6" y=".6" width="11.800" height="14.500" rx="2.500" fill="#f3e9e6" stroke="#d8201a" strokeWidth="1.200" /><Acro x={2.2} y={4} s={0.75} c="#d8201a" /></svg>
        <TitleText $gap={6}><T w={223} {...m} color="#6b6b6b" size={14}>Bài 01 - Adobe Acrobat Pro DC (32-bit)</T></TitleText>
        <Controls color="#7a7a7a" />
      </TitleBar>
      <MenuRow>
        <T w={20} {...m}>File</T><T w={23} {...m}>Edit</T><T w={27.5} {...m}>View</T><T w={26} {...m}>Sign</T><T w={46} {...m}>Window</T><T w={27} {...m}>Help</T>
      </MenuRow>
      <TabRow>
        <TabZone $w="160px" $pb={7}><T w={46} font={HOST} size={16.5} color="#c4c4c4">Home</T><Gap $w={29} /><T w={39} font={HOST} size={16.5} color="#c4c4c4">Tools</T></TabZone>
        <ActiveTab><T w={41} font={HOST} size={15} color="#f2f2f2">Bài 01</T><Ic w={8} sw={1.8} c="#d0d0d0"><path d="M1 1l6 6M7 1L1 7" /></Ic></ActiveTab>
        <TabZone $grow="1" $pb={2}>
          <Spacer />
          <Ic w={22} h={22} fill="#c9c9c9" c="none"><path d="M2 1h17a2 2 0 0 1 2 2v11a2 2 0 0 1-2 2H11l-5 5v-5H2a2 2 0 0 1-2-2V3a2 2 0 0 1 2-2z" /><path d="M4.500 7.500h2.500v2H4.500zM9.300 7.500h2.500v2H9.300zM14 7.500h2.500v2H14z" fill="#424242" /></Ic>
          <Gap $w={18.5} />
          <Ic w={22}><circle cx="11" cy="11" r="9.800" /><path d="M8.300 9a2.700 2.700 0 1 1 3.800 2.300c-.8.5-1.100.8-1.100 1.700M11 14.300v2" /></Ic>
          <Gap $w={22} />
          <Ic w={17} h={20} fill="#858585" c="none"><path d="M8.500 0c1 0 1.400.7 1.400 1.500 3 .8 4.100 3 4.100 6 0 5 1.500 6.500 3 8v1.500H0v-1.500c1.500-1.500 3-3 3-8 0-3 1.100-5.200 4.100-6C7.100.7 7.500 0 8.500 0zM6 18h5l-2.500 2z" /></Ic>
          <Gap $w={32.5} />
          <T w={58.5} font={UI} weight={700} size={16} lh={20} color="#f5f5f5">Sign In</T>
        </TabZone>
      </TabRow>
      <Tools>
        <Tool><Ic w={20} c="#8d8d8d" sw={1.7}><path d="M1 1h13l5 5v13H1zM6 1v6h8V1M5 19v-6.500h10V19" /><path d="M11.500 2.500v3" /></Ic></Tool>
        <Tool><Ic w={24} sw={1.8}><path d="M12 1.700l2.900 7.300 7.800.5-6 5 2 7.600-6.700-4.300-6.700 4.300 2-7.600-6-5 7.800-.5z" /></Ic></Tool>
        <Tool><Ic w={24} sw={2}><path d="M8 16H6a4.600 4.600 0 0 1-.5-9.200A7 7 0 0 1 18.500 7 4.600 4.600 0 0 1 18 16h-2M12 22V11M8 14.500l4-4 4 4" /></Ic></Tool>
        <Tool $w={43}><Ic w={22} h={22} c="none" fill="#c6c6c6"><path d="M4 1h14v6H4zM0 8h22v10h-3v-4H3v4H0z" /><path d="M5 14.500h12v6.500H5z" stroke="#c6c6c6" strokeWidth="1.800" fill="#4c4c4c" /><path d="M6 3h10v4H6z" fill="#4c4c4c" /><path d="M8 17h6v1.400H8z" /></Ic></Tool>
        <Tool $w={45}><Ic w={24} sw={2.2}><circle cx="10" cy="10" r="8.300" /><path d="M16 16l7 7" strokeWidth="2.800" /><path d="M5.500 9.800h2M9 9.800h2M12.500 9.800h2" /></Ic></Tool>
        <Tool><Ic w={22}><circle cx="11" cy="11" r="9.800" /><path d="M11 17V6M6.800 10L11 5.800 15.200 10" /></Ic></Tool>
        <Tool><Ic w={22}><circle cx="11" cy="11" r="9.800" /><path d="M11 5v11M6.800 12l4.200 4.200L15.200 12" /></Ic></Tool>
        <Gap $w={10} /><Under $w={32} $p={9}><T w={14} {...m}>24</T></Under>
        <Gap $w={6.5} /><T w={25} {...m}>/  38</T><Gap $w={19.5} /><VLine />
        <Gap $w={11} />
        <Tool $w={44}><Ic w={14} h={21} fill="#55acff" c="none"><path d="M1 0l12.500 12.500H9l2.500 6-2.800 1.500L6 14 1 18z" /></Ic></Tool>
        <Tool $w={43}><Ic w={24} sw={1.8}><path d="M7 13V5.500a1.500 1.500 0 0 1 3 0V11M10 10V3a1.500 1.500 0 0 1 3 0v7M13 10V3.500a1.500 1.500 0 0 1 3 0V11M16 11V5.500a1.500 1.500 0 0 1 3 0V15c0 5-2.500 7.500-6 7.500S8 21.500 6 18l-3.500-5.500c-.5-1.500 1-2.300 2.200-1L7 14" /></Ic></Tool>
        <Tool $w={44}><Ic w={22}><circle cx="11" cy="11" r="9.800" /><path d="M6 11h10" /></Ic></Tool>
        <Tool $w={44}><Ic w={22}><circle cx="11" cy="11" r="9.800" /><path d="M6 11h10M11 6v10" /></Ic></Tool>
        <Gap $w={10} />
        <Under $w={77} $p={10}><T w={32} {...m}>108%</T><Gap $w={19} /><svg width="8" height="5"><path d="M0 0h8L4 5z" fill="#c6c6c6" /></svg></Under>
        <Gap $w={22} />
        <Ic w={20} h={5} fill="#c6c6c6" c="none"><circle cx="2.500" cy="2.500" r="2" /><circle cx="10" cy="2.500" r="2" /><circle cx="17.500" cy="2.500" r="2" /></Ic>
        <Spacer />
        <Tool><Ic w={24} sw={2.2}><g transform="rotate(-45 11 11)"><rect x="-1" y="7" width="13" height="7.500" rx="3.750" /><rect x="9" y="7" width="13" height="7.500" rx="3.750" /></g><path d="M12.500 23a3 3 0 0 1 .3-5 4 4 0 0 1 7.200.5 2.400 2.400 0 0 1 2.500 4.500z" fill="#c6c6c6" stroke="#4c4c4c" strokeWidth="1" /></Ic></Tool>
        <Tool><Ic w={22} h={17} sw={1.7}><path d="M1 1h20v15H1zM1 1l10 8.500L21 1M1 16l7.500-8M21 16l-7.500-8" /></Ic></Tool>
        <Tool><Ic w={24} c="none" fill="#c6c6c6"><path d="M9 1c3 0 4.500 2 4.500 4.800 0 2.600-1 4-1.800 5.200v1.500c4 1 5 2 5.300 3.500L13 19H0c0-4 1.500-5 6.300-6.500V11C5.500 9.800 4.500 8.400 4.500 5.800 4.500 3 6 1 9 1z" /><circle cx="18" cy="17.500" r="6.500" stroke="#4c4c4c" strokeWidth="1" /><path d="M14.500 17.500h7M18 14v7" stroke="#4c4c4c" strokeWidth="1.600" /></Ic></Tool>
        <Gap $w={5} />
      </Tools>
      <DocRow>
        <SideStrip><svg width="6" height="11"><path d="M0 0l6 5.500L0 11z" fill="#c0c0c0" /></svg></SideStrip>
        <Pages>
          <Page $h={414}>
            <Lines>
              <DocLine><Mark $l={26} $w={26}>-</Mark><Just>Phải chuột lên Pool vừa tạo (Storage Pool 1) <A /> New Virtual Disk <A /> OK <A /> Next</Just></DocLine>
              <DocLine><Gap $w={52} /><Just><A />Name: tùy ý (VD: Virtual Disk 1) <A /> Next <A /> Next <A /> Chọn Mirror <A /> Next <A /> Fixed</Just></DocLine>
              <DocLine><Gap $w={52} /><Para w={275}><A /> Maximum size <A /> Next <A /> Create</Para></DocLine>
              <DocLine><Mark $l={26} $w={26}>-</Mark><Just>Tại cửa sổ “Select the server and disk” <A /> Next <A /> Next <A /> Next <A /> NTFS <A /> Next <A /></Just></DocLine>
              <DocLine><Gap $w={52} /><Para w={53}>Create.</Para></DocLine>
              <DocLine $gap={24.5}><Mark $w={26} $weight={400}>6.</Mark><Para w={205}>Kiểm tra khả năng chịu lỗi.</Para></DocLine>
              <DocLine><Gap $w={26} /><T w={95} size={18.7} lh={24.85} font={DF} weight={700} italic color="#0c0c0c">Hướng dẫn:</T></DocLine>
              <DocLine><Mark $l={26} $w={26}>-</Mark><Para w={294}>Tạo 1 tập tin trên ổ đĩa vừa tạo ở câu 6.</Para></DocLine>
              <DocLine><Mark $l={26} $w={26}>-</Mark><Para w={272}>Tắt PC2 <A /> Kiểm tra tập tin vừa tạo.</Para></DocLine>
              <DocLine><Mark $l={26} $w={26}>-</Mark><Para w={612}>Gỡ bỏ 1 ổ đĩa (trong 3 ổ đĩa cấu hình RAID-5), mở máy 2 lên <A /> Kiểm tra tập tin.</Para></DocLine>
              <DocLine><Mark $l={26} $w={26}>-</Mark><Para w={272}>Tắt PC3 <A /> Kiểm tra tập tin vừa tạo.</Para></DocLine>
            </Lines>
            <FootRule />
            <Foot>
              <T w={591} size={17.3} lh={24} font={DF} color="#1a1a1a">Bộ môn: Viễn thông và Mạng, Khoa Điện tử - Viễn thông, ĐH KHTN, ĐHQG-HCM</T>
              <Gap $w={105} /><T w={17} size={17} lh={16} font={DF} color="#1a1a1a">24</T>
            </Foot>
          </Page>
          <Page $h={20} />
        </Pages>
        <ScrollTrack><Thumb /><Mark2 /></ScrollTrack>
        <SideStrip><svg width="6" height="11"><path d="M6 0L0 5.500 6 11z" fill="#c0c0c0" /></svg></SideStrip>
        <Rail>
          <RailCell $h={46}><Ic w={22} sw={2.2}><circle cx="9" cy="9" r="7.600" /><path d="M14.500 14.500l6 6" strokeWidth="3" /><path d="M8 5.500v7L4.500 9zM10 5.500v7L13.500 9z" fill="#c6c6c6" stroke="none" /></Ic></RailCell>
          <HLine />
          <RailCell $h={46}><Ic w={24} c="#ee6f76" sw={2}><path d="M11 21H2V2h11l5 5v5" /><Acro x={5} y={7} s={0.8} c="#ee6f76" /><circle cx="17.500" cy="17.500" r="6" fill="#ee6f76" stroke="none" /><path d="M14 17.500h7M17.500 14v7" stroke="#4c4c4c" /></Ic></RailCell>
          <RailCell $h={45.5}><Ic w={25} h={25} c="#9090f4" sw={2}><path d="M8 15H1V1h10v11" /><path d="M12 0h8v5h5v10h-9v-3h-4zM21 0l4 4h-4z" fill="#9090f4" stroke="none" /><Acro x={3.5} y={4} s={0.6} c="#9090f4" /><path d="M12 12v7" strokeWidth="2.600" /><path d="M6 18h12l-6 6.500z" fill="#9090f4" stroke="none" /></Ic></RailCell>
          <RailCell><Ic w={23} h={23} c="#e76bb1" sw={2}><path d="M1.500 1.500h20v8h-20zM1.500 13.500h9v8h-9z" /><path d="M15 14.500h8M15 18h8M15 21.500h8" strokeWidth="1.200" /></Ic></RailCell>
          <RailCell><Ic w={20} h={22} c="#d46bea" sw={2}><path d="M1.500 1.500h12l5 5v14h-17z" /><path d="M5 6.500h5M5 9h9M5 11.500h9" strokeWidth="1.200" /><path d="M5 13.500h3v4l-1.500 1.500L5 17.500z" fill="#d46bea" stroke="none" /><path d="M11.500 14.500l3.500 3.500M15 14.500L11.500 18" strokeWidth="1.400" /></Ic></RailCell>
          <RailCell><Ic w={25} h={24} c="#a77bea" sw={2}><path d="M1 22.500l2-7L15.500 3c2.500-2 6 1 4 3.500L8.500 18.500l-3.500 2M1 22.500h9.500c3 0 4-6 6-6s-1.500 5 .5 5 2-3 3.500-3 0 3 1.500 3 1.500-1 2-1.500" /></Ic></RailCell>
          <RailCell><Ic w={24} c="#4fb7c5" sw={2}><path d="M11 21H2V2h11l5 5v5" /><Acro x={5} y={7} s={0.8} c="#4fb7c5" /><circle cx="17.500" cy="17.500" r="6" fill="#4fb7c5" stroke="none" /><path d="M14 17.500h4v-2.500l3 2.500-3 2.500v-2.500" fill="#4c4c4c" stroke="#4c4c4c" strokeWidth="1.500" /></Ic></RailCell>
          <RailCell $h={43}><Ic w={22} h={22} c="#aaf05a" sw={2.2}><path d="M12.500 1.500h8v18.500h-8z" /><path d="M2 10.500h8M2 10.500v9.500M2 20h8M10 10v10" strokeDasharray="2.500 1.500" strokeWidth="2" /><path d="M1 1v7.500h7.500L5.500 5.500 9 2 7.500 0.800 4 3.500z" fill="#aaf05a" stroke="none" /></Ic></RailCell>
          <RailCell $h={24} $bg="#3d3d3d"><Ic w={13} h={8} sw={2.4}><path d="M1 1l5.500 5.500L12 1" /></Ic></RailCell>
          <HLine />
          <RailCell $h={46}><Gutter><Ic w={15} h={16} sw={2.2}><path d="M1.500 0v16" strokeWidth="3" /><path d="M5 8h9M9.500 3.500L14 8l-4.500 4.500" /></Ic></Gutter></RailCell>
        </Rail>
      </DocRow>
    </Win>
  );
}

/* ---------- host taskbar ---------- */

const HostBar = styled.footer`
  grid-column: 1 / 3;
  display: flex;
  align-items: center;
  padding: 0 19px 0 762px;
  background: #202020;
  border-top: 1px solid #2c2c2c;
`;
const AppCell = styled.div`
  width: 44px;
  height: 48px;
  flex: none;
  display: flex;
  flex-direction: column;
  align-items: center;
  padding-top: 12px;
`;
const AppHot = styled.div`
  width: 40px;
  height: 40px;
  margin-top: -8px;
  padding-top: 8px;
  display: flex;
  flex-direction: column;
  align-items: center;
  border-radius: 4px;
  background: #2f2f2f;
`;
const Dot = styled.i`
  width: ${(p) => p.$w || 6}px;
  height: 3px;
  border-radius: 2px;
  margin-top: 4px;
  background: ${(p) => (p.$w ? "#5d5d5d" : "#9a9a9a")};
`;
const GitDisc = styled.div`
  width: 22px;
  height: 22px;
  margin-top: 1px;
  border-radius: 50%;
  display: grid;
  place-items: center;
  background: #7431a3;
  color: #f4eef8;
  font-size: 18px;
`;
const TrayCell = styled.div`
  width: ${(p) => p.$w}px;
  display: grid;
  place-items: center;
`;
const HostClock = styled.div`
  display: flex;
  flex-direction: column;
  align-items: flex-end;
  width: 62px;
`;

function HostTaskbar() {
  const W = "#f2f2f2";
  return (
    <HostBar>
      <AppCell><svg width="24" height="24"><defs><linearGradient id="wl" x2="1" y2="1"><stop stopColor="#7fdcfd" /><stop offset="1" stopColor="#109af0" /></linearGradient></defs><path d="M.5.500h11v11H.5zM12.500.500h11v11h-11zM.5 12.500h11v11H.5zM12.500 12.500h11v11h-11z" fill="url(#wl)" /></svg></AppCell>
      <AppCell><svg width="24" height="24"><rect y="3" width="24" height="18" rx="1.500" fill="#333638" /><path d="M0 6.500v-2A1.500 1.500 0 0 1 1.500 3H15v3.500z" fill="#b9b9b9" /><path d="M15 3h7.500A1.500 1.500 0 0 1 24 4.500v2h-9z" fill="#6a6a6a" /><path d="M3.500 9l4 3.700-4 3.700M11 17h7" fill="none" stroke="#e6e6e6" strokeWidth="2" /></svg></AppCell>
      <AppCell><svg width="24" height="24"><rect width="24" height="24" rx="6" fill="#ec3a3c" /><circle cx="12" cy="12" r="9" fill="#fff" /><path d="M6.800 8.500c.8-1.600 2.600-1.600 3.400 0l2 4 1.300-2.500c-.5-2 .8-3.200 2.300-3 1.500.3 2 1.600 1.300 3l-3.600 6.500c-.7 1.200-2.300 1.200-3 0L7 10.500c-.3-.7-.4-1.300-.2-2z" fill="#e22f33" /></svg><Dot /></AppCell>
      <AppCell><svg width="24" height="24"><path d="M0 2.500h8l2 2h14V9H0z" fill="#e1a211" /><path d="M0 6h9l2-1.500h13V22H0z" fill="#ffcf48" /><path d="M4 22v-4.500A1.500 1.500 0 0 1 5.500 16h13a1.500 1.500 0 0 1 1.500 1.500V22z" fill="#1484d4" /><path d="M7.500 19h9v3h-9z" fill="#0b5fa5" /></svg><Dot /></AppCell>
      <AppCell><GitDisc><FaGithub /></GitDisc></AppCell>
      <AppCell><svg width="24" height="24"><rect x="1.500" y="1" width="21" height="21.500" rx="4" fill="#b30b00" /><Acro x={6} y={5.5} s={1.1} c="#fff" /></svg><Dot /></AppCell>
      <AppCell><VmIcon size={24} /><Dot /></AppCell>
      <AppCell><AppHot>
        <svg width="26" height="24"><rect x="1.500" width="18" height="18.500" rx="2" fill="#f4f4f4" /><path d="M4 3h10v1.500M4 3v11h2" fill="none" stroke="#d3301b" strokeWidth="2.600" strokeDasharray="3 1" /><rect x="8" y="6" width="9" height="9" rx="1" fill="#fff" stroke="#b9b9b9" strokeWidth="1.600" /><path d="M12 17l10-3M14 12l2 7" stroke="#9aa3a8" strokeWidth="1.600" /><circle cx="23" cy="13.500" r="2" fill="none" stroke="#2a9be6" strokeWidth="1.600" /><circle cx="15" cy="21" r="2.200" fill="none" stroke="#2a9be6" strokeWidth="1.600" /></svg>
        <Dot $w={16} /></AppHot></AppCell>
      <AppCell><svg width="24" height="24"><path d="M12 .5l10 5.500-1 10.500-9 6.500-9-6.500L2 6z" fill="#d6dde5" /><path d="M12 1.800l8 4.200-8 4.500L4 6z" fill="#123c68" /><path d="M3.200 7.500l7.800 4.300v9L4 15.800z" fill="#1c4a78" /><path d="M20.800 7.500L13 11.800v9l7-5z" fill="#0c2c50" /></svg><Dot /></AppCell>
      <Spacer />
      <TrayCell $w={24}><svg width="14" height="8"><path d="M1 7l6-6 6 6" fill="none" stroke={W} strokeWidth="1.400" /></svg></TrayCell>
      <TrayCell $w={24}><svg width="16" height="16"><rect width="16" height="16" fill="#a9dcf5" /><rect x="1.500" y="1.500" width="13" height="13" fill="#e6f6fd" /><text x="4" y="13" fontSize="13" fontWeight="800" fontFamily="Open Sans" fill="#1f9ad6">E</text></svg></TrayCell>
      <TrayCell $w={26}><svg width="15" height="15" fill="none" stroke={W} strokeWidth="1.100"><circle cx="7.500" cy="7.500" r="6.600" /><circle cx="7.500" cy="7.500" r="1.800" /><path d="M4.800 5.500a3 3 0 0 0 0 4M10.200 5.500a3 3 0 0 1 0 4M2.800 6v3M12.200 6v3" /></svg></TrayCell>
      <TrayCell $w={31}><svg width="17" height="13" fill="none" stroke={W} strokeWidth="1.300"><path d="M.8 5a11 11 0 0 1 15.400 0M3.300 7.500a7.400 7.400 0 0 1 10.400 0M5.700 9.700a4 4 0 0 1 5.600 0" /><circle cx="8.500" cy="11.500" r="1.200" fill={W} stroke="none" /></svg></TrayCell>
      <TrayCell $w={17}><svg width="16" height="13" fill="none" stroke={W} strokeWidth="1.200"><path d="M.8 4.200h2.700L7 1v11L3.500 8.800H.8zM10 4.200l5 5M15 4.200l-5 5" /></svg></TrayCell>
      <TrayCell $w={33}><svg width="17" height="13"><path d="M5 3.500h9.500v8H3.500V7" fill="none" stroke={W} strokeWidth="1.300" /><path d="M6.500 5h6.500v5H5.500V7.500zM15.300 6h1.500v3h-1.500zM0 2.500h5.500v2L4 6.300H1.500L0 4.500zM1 0h1.200v2.500H1zM3.400 0h1.200v2.500H3.400z" fill={W} /></svg></TrayCell>
      <HostClock>
        <T w={42.5} size={12} color={W}>2:24 PM</T>
        <T w={54.5} size={12} color={W}>25-Oct-23</T>
      </HostClock>
    </HostBar>
  );
}

/* ---------- page ---------- */

function VmWindow({ title, w, upper, titleBg, titleColor, bg, children, bar }) {
  return (
    <Win $upper={upper}>
      <TitleBar $bg={titleBg}>
        <VmIcon />
        <TitleText><T w={w} font={HOST} size={14.3} color={titleColor}>{title}</T></TitleText>
        <Controls color={upper ? "#919191" : "#7a7a7a"} />
      </TitleBar>
      <Guest $bg={bg}>
        <Canvas>{children}</Canvas>
        {bar}
      </Guest>
    </Win>
  );
}

const ORDER2 = ["Recycle Bin", "This PC", "Network", "Control Panel"];

export default function App() {
  return (
    <>
      <Global />
      <Screen>
        <VmWindow upper title="WinSer2019_1 (06-05) [Running] - Oracle VM VirtualBox" w={322} titleColor="#858585" bg="#449f9f"
          bar={<GuestTaskbar h={36} bg="#0b1918" sx={1} sy={1} apps={4} clock={[43, 58]} badge textSize={11.5} textLh={16} />}>
          <DesktopIcons items={["This PC", "Recycle Bin", "Network", "Control Panel"]} colW={78} top={7} pitch={96} iw={44} ih={44} size={12} lh={17}
            widths={{ "This PC": 40, "Recycle Bin": 60, Network: 45, "Control Panel": 72 }} />
          <ExplorerWindow />
          <NotepadWindow />
        </VmWindow>
        <VmWindow upper title="WinSer2019_2 (06-05) [Running] - Oracle VM VirtualBox" w={324} titleColor="#858585"
          bg="linear-gradient(90deg, #787878 0, #808080 40px)"
          bar={<GuestTaskbar h={25} bg="#141414" sx={0.835} sy={0.7} clock={[35.5, 48]} badge textSize={9} textLh={11.3} />}>
          <DesktopIcons items={ORDER2} colW={63} top={5} pitch={62.4} iw={36.5} ih={29} size={8.8} lh={15}
            widths={{ "This PC": 33, "Recycle Bin": 50, Network: 38, "Control Panel": 60 }} />
          <Wallpaper $x={379} $y={209}><T w={198} size={86} lh={90} weight={700} color="#000" stretch>PC2</T></Wallpaper>
        </VmWindow>
        <VmWindow title="WinSer2019_3 (06-05) [Running] - Oracle VM VirtualBox" w={324} titleBg="#242424" titleColor="#6b6b6b"
          bg="linear-gradient(180deg, #ad7252 0, #b97a57 34px)"
          bar={<GuestTaskbar h={28} bg="#1b110e" sx={0.93} sy={0.78} clock={[39.5, 53.5]} textSize={9.8} textLh={12.5} />}>
          <DesktopIcons items={ORDER2} colW={73} top={5} pitch={70.2} iw={41} ih={33} size={10} lh={16}
            widths={{ "This PC": 37, "Recycle Bin": 56, Network: 42, "Control Panel": 67 }} />
          <Wallpaper $x={380} $y={214.5}><T w={198} size={86} lh={90} weight={700} color="#000" stretch>PC3</T></Wallpaper>
        </VmWindow>
        <AcrobatWindow />
        <HostTaskbar />
      </Screen>
    </>
  );
}
